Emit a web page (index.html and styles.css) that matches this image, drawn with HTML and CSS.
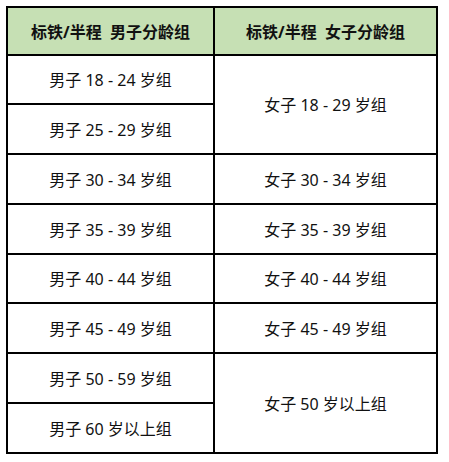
FILE: index.html
```html
<!DOCTYPE html>
<html lang="zh">
<head>
<meta charset="utf-8">
<link rel="stylesheet" href="styles.css">
</head>
<body>
<table class="groups">
  <colgroup>
    <col class="col-left">
    <col class="col-right">
  </colgroup>
  <thead>
    <tr class="head-row">
      <th>标铁/半程&nbsp; 男子分龄组</th>
      <th>标铁/半程&nbsp; 女子分龄组</th>
    </tr>
  </thead>
  <tbody>
    <tr><td>男子 18 - 24 岁组</td><td rowspan="2">女子 18 - 29 岁组</td></tr>
    <tr><td>男子 25 - 29 岁组</td></tr>
    <tr><td>男子 30 - 34 岁组</td><td>女子 30 - 34 岁组</td></tr>
    <tr><td>男子 35 - 39 岁组</td><td>女子 35 - 39 岁组</td></tr>
    <tr><td>男子 40 - 44 岁组</td><td>女子 40 - 44 岁组</td></tr>
    <tr><td>男子 45 - 49 岁组</td><td>女子 45 - 49 岁组</td></tr>
    <tr><td>男子 50 - 59 岁组</td><td rowspan="2">女子 50 岁以上组</td></tr>
    <tr><td>男子 60 岁以上组</td></tr>
  </tbody>
</table>
</body>
</html>
```

FILE: styles.css
```css
html, body {
  margin: 0;
  padding: 0;
  background: #ffffff;
}

body {
  padding: 6px 0 0 6px;
  font-family: "Noto Sans", "Noto Sans CJK SC", sans-serif;
  color: #111111;
}

.groups {
  border-collapse: collapse;
  width: 430px;
  table-layout: fixed;
  font-size: 16px;
}

.groups th,
.groups td {
  border: 2px solid #000000;
  text-align: center;
  vertical-align: middle;
  padding: 0;
  white-space: nowrap;
}

.groups th {
  background: #c6e0b4;
  font-weight: bold;
}

.col-left {
  width: 207px;
}

.col-right {
  width: 223px;
}

.head-row {
  height: 47.5px;
}

.groups tbody tr {
  height: 49.75px;
}
```
